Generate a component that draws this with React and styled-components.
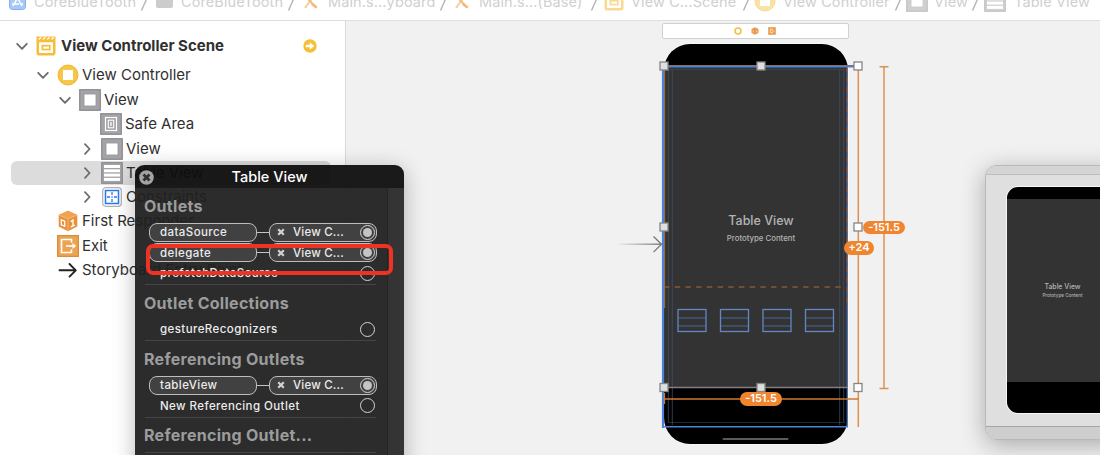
import React from "react";
import styled, { createGlobalStyle } from "styled-components";

const GlobalStyle = createGlobalStyle`
  * { box-sizing: border-box; }
  body {
    margin: 0;
    overflow: hidden;
    font-family: Inter, "Liberation Sans", sans-serif;
    background: #fff;
  }
`;

const Window = styled.div`
  position: relative;
  width: 1100px;
  height: 455px;
  overflow: hidden;
  display: flex;
  flex-direction: column;
`;

/* ---------- jump bar ---------- */

const JumpBar = styled.nav`
  flex: none;
  height: 21px;
  overflow: hidden;
  display: flex;
  background: #fff;
  border-bottom: 1px solid #dedede;
`;

const Crumb = styled.div`
  flex: none;
  width: ${(p) => p.$width}px;
  display: flex;
  height: 20px;
`;

const CrumbIcon = styled.div`
  flex: none;
  width: ${(p) => p.$width}px;
  padding-left: ${(p) => p.$inset}px;
  svg { display: block; margin-top: ${(p) => p.$shift || 0}px; }
`;

const CrumbLabel = styled.span`
  flex: 1;
  margin-top: -8px;
  height: 20px;
  line-height: 20px;
  font-size: 14.5px;
  letter-spacing: 0.1px;
  white-space: nowrap;
  color: #d0d0d0;
`;

/* ---------- outline ---------- */

const Workspace = styled.div`
  flex: 1;
  display: flex;
  min-height: 0;
`;

const Outline = styled.aside`
  flex: none;
  width: 346px;
  padding: 9px 14px 0 11px;
  border-right: 1px solid #d9d9d9;
  background: #fff;
`;

const OutlineRow = styled.div`
  display: flex;
  align-items: center;
  height: ${(p) => p.$height || 24.25}px;
  padding-left: ${(p) => p.$indent}px;
  border-radius: 6px;
  background: ${(p) => (p.$selected ? "#dcdcdc" : "transparent")};
`;

const Disclosure = styled.span`
  flex: none;
  width: 20px;
  display: flex;
  svg { display: block; }
`;

const RowIcon = styled.span`
  flex: none;
  width: ${(p) => p.$width || 25}px;
  display: flex;
  svg { display: block; }
`;

const RowLabel = styled.span`
  flex: 1;
  font-size: 15px;
  line-height: 20px;
  letter-spacing: ${(p) => p.$tracking || 0}px;
  font-weight: ${(p) => (p.$bold ? 700 : 400)};
  white-space: nowrap;
  color: #303030;
`;

/* ---------- canvas ---------- */

const Canvas = styled.main`
  position: relative;
  flex: 1;
  background: #f1f1f1;
  overflow: hidden;
`;

const SceneDock = styled.div`
  position: absolute;
  left: 316px;
  top: 2px;
  width: 187px;
  height: 16px;
  display: flex;
  align-items: center;
  justify-content: center;
  gap: 9px;
  padding-right: 1px;
  border: 1px solid #d0d0d0;
  border-radius: 2px;
  background: #fff;
`;

const Phone = styled.section`
  position: absolute;
  left: ${(p) => p.$x}px;
  top: ${(p) => p.$y}px;
  width: ${(p) => p.$w}px;
  height: ${(p) => p.$h}px;
  padding-top: ${(p) => p.$status}px;
  border-radius: ${(p) => p.$radius}px;
  background: #000;
  box-shadow: 0 0 0 1px #f7f7f7;
  overflow: hidden;
`;

const PhoneTable = styled.div`
  height: ${(p) => p.$height}px;
  padding-top: ${(p) => p.$top}px;
  padding-left: ${(p) => p.$inset || 0}px;
  background: #333;
  text-align: center;
  color: #b4b4b4;
`;

const TableTitle = styled.div`
  font-size: ${(p) => p.$size}px;
  line-height: ${(p) => p.$line}px;
  font-weight: 500;
  white-space: nowrap;
`;

const Guides = styled.svg`
  position: absolute;
  inset: 0;
  display: block;
`;

const Constraint = styled.span`
  position: absolute;
  left: ${(p) => p.$x}px;
  top: ${(p) => p.$y}px;
  width: ${(p) => p.$w}px;
  height: 13.5px;
  line-height: 13px;
  border-radius: 7px;
  background: #f08530;
  color: #fff;
  font-size: 11px;
  font-weight: 600;
  text-align: center;
`;

const Preview = styled.section`
  position: absolute;
  left: 639px;
  top: 144px;
  width: 140px;
  height: 275px;
  display: flex;
  flex-direction: column;
  border: 1px solid #b9b9b9;
  border-radius: 11px;
  background: #dfdfdf;
  overflow: hidden;
`;

const PreviewShadow = styled.div`
  position: absolute;
  left: 639px;
  top: 144px;
  width: 140px;
  height: 275px;
  border-radius: 11px;
  box-shadow: 0 5px 24px rgba(0, 0, 0, 0.3);
`;

const PreviewBar = styled.div`
  flex: none;
  height: ${(p) => p.$height}px;
  background: ${(p) => (p.$footer ? "#cecece" : "#d4d4d4")};
  border-top: ${(p) => (p.$footer ? "1px solid #a5a5a5" : "none")};
  border-bottom: ${(p) => (p.$footer ? "none" : "1px solid #bdbdbd")};
`;

const PreviewBody = styled.div`
  position: relative;
  flex: 1;
`;

/* ---------- connections panel ---------- */

const Panel = styled.section`
  position: absolute;
  left: 135px;
  top: 165px;
  width: 269px;
  height: 310px;
  display: flex;
  flex-direction: column;
  border-radius: 9px;
  overflow: hidden;
`;

const PanelShadow = styled.div`
  position: absolute;
  left: 135px;
  top: 165px;
  width: 269px;
  height: 310px;
  border-radius: 9px;
  box-shadow: 0 4px 22px rgba(0, 0, 0, 0.27);
  clip-path: polygon(-40px -40px, 310px -40px, 310px 340px, 269px 340px, 269px 8px, 261px 0, 8px 0, 0 8px, 0 340px, -40px 340px);
`;

const PanelHeader = styled.header`
  position: relative;
  flex: none;
  height: 23px;
  line-height: 23px;
  text-align: center;
  font-size: 14.5px;
  font-weight: 500;
  color: #fff;
  background: rgba(13, 13, 13, 0.945);
  svg { position: absolute; left: 4px; top: 4.5px; }
`;

const PanelContent = styled.div`
  flex: 1;
  display: flex;
  background: rgba(32, 32, 32, 0.945);
`;

const Sections = styled.div`
  flex: 1;
  padding-left: 10px;
`;

const ScrollTrack = styled.div`
  flex: none;
  width: 17px;
  border-left: 1px solid #242424;
  background: #343434;
`;

const Section = styled.div`
  width: 231px;
  padding: 7.5px 0 0.5px;
  border-bottom: 1px solid #454545;
`;

const SectionTitle = styled.h2`
  margin: 0 0 6.5px -1px;
  font-size: 16px;
  line-height: 20px;
  font-weight: 700;
  letter-spacing: 0.28px;
  color: #9c9c9c;
  white-space: nowrap;
`;

const OutletRow = styled.div`
  display: flex;
  align-items: center;
  height: 20.5px;
  padding-left: 4px;
  margin-right: -1px;
  color: #ececec;
  font-size: 11.5px;
  font-weight: 500;
  letter-spacing: 0.42px;
`;

const Pill = styled.div`
  flex: none;
  width: 108px;
  height: 19px;
  display: flex;
  align-items: center;
  padding: 0 1px 0 ${(p) => p.$inset}px;
  border: 1.3px solid #bdbdbd;
  border-radius: 8px;
  background: #414141;
`;

const Wire = styled.span`
  width: 12px;
  height: 1px;
  background: #c4c4c4;
`;

const OutletName = styled.span`
  flex: 1;
  padding-left: ${(p) => p.$inset}px;
  letter-spacing: ${(p) => p.$tracking ?? 0.42}px;
  white-space: nowrap;
`;

const Socket = styled.span`
  flex: none;
  width: 15px;
  height: 15px;
  margin-right: ${(p) => (p.$filled ? 0 : 2)}px;
  padding: 2px;
  border: 1px solid #d4d4d4;
  border-radius: 50%;
  &::after {
    content: "";
    display: ${(p) => (p.$filled ? "block" : "none")};
    width: 9px;
    height: 9px;
    border-radius: 50%;
    background: #c4c4c4;
  }
`;

const Highlight = styled.div`
  position: absolute;
  left: 145.5px;
  top: 243.5px;
  width: 247px;
  height: 31px;
  border: 4px solid #ee3324;
  border-radius: 7px;
`;

/* ---------- drawings ---------- */

const Chevron = ({ open }) => (
  <svg width="12" height="12" viewBox="0 0 12 12" fill="none" stroke="#6d6d6d" strokeWidth="1.8" strokeLinecap="round" strokeLinejoin="round">
    <path d={open ? "M1.2 3.8 6 8.8 10.8 3.8" : "M4 1.2 8.6 6 4 10.8"} />
  </svg>
);

const ViewIcon = ({ kind = "view", faded }) => (
  <svg width="22" height="22" viewBox="0 0 22 22" opacity={faded ? 0.5 : 1}>
    <rect x=".75" y=".75" width="20.5" height="20.5" fill="#a3a3a8" stroke="#8b8b90" strokeWidth="1.3" />
    {kind === "view" && <rect x="5" y="5" width="12" height="12" fill="#fff" stroke="#929296" strokeWidth=".8" />}
    {kind === "safe" && (
      <g fill="none" stroke="#fff">
        <rect x="5.5" y="4.5" width="11" height="13" strokeWidth="1.2" />
        <rect x="8.3" y="7.2" width="5.4" height="7.6" strokeWidth="1.1" />
        <path d="M11 9v4" strokeWidth="1.3" />
      </g>
    )}
    {kind === "table" && (
      <g fill="#fff">
        <rect x="3" y="3" width="16" height="3" />
        <rect x="3" y="7.3" width="16" height="3" />
        <rect x="3" y="11.6" width="16" height="3" />
        <rect x="3" y="15.9" width="16" height="3" />
      </g>
    )}
  </svg>
);

const ControllerIcon = ({ faded }) => (
  <svg width="22" height="22" viewBox="0 0 22 22" opacity={faded ? 0.5 : 1}>
    <circle cx="11" cy="11" r="10" fill="#f7c744" stroke="#f1b632" strokeWidth="1" />
    <rect x="5.5" y="5.5" width="11" height="11" rx=".8" fill="#fff" stroke="#edb83c" strokeWidth=".7" />
  </svg>
);

const SceneIcon = ({ faded }) => (
  <svg width="20" height="20" viewBox="0 0 20 20" opacity={faded ? 0.55 : 1}>
    <path d="M.5.5h19v16.200q0 2.800-2.800 2.800H3.300Q.5 19.500.5 16.700z" fill="#f6bd38" />
    <path d="M2 3.600 4 1.200h1.900L3.900 3.600zM6.200 3.600l2-2.400h1.900l-2 2.400zM10.400 3.600l2-2.400h1.900l-2 2.400zM14.600 3.600l2-2.400h1.900l-2 2.400z" fill="#fff" />
    <rect x="3" y="6.200" width="14" height="10.800" rx=".8" fill="#fff" />
    <rect x="6.400" y="9.700" width="7.400" height="3.800" fill="#fff" stroke="#f6bd38" strokeWidth="1.700" />
  </svg>
);

const EntryArrow = () => (
  <svg width="14" height="14" viewBox="0 0 14 14">
    <circle cx="7" cy="7" r="6.700" fill="#f5bf38" />
    <path d="M2.800 5.700h4V3.200L11.200 7l-4.400 3.800V8.300h-4z" fill="#fff" />
  </svg>
);

const ConstraintsIcon = () => (
  <svg width="22" height="22" viewBox="0 0 22 22">
    <rect x="1.700" y="1.700" width="18.600" height="18.600" rx="3" fill="#fff" stroke="#b0b0b0" strokeWidth="1.200" />
    <rect x="4.500" y="4.500" width="13" height="13" fill="#fff" stroke="#2478f0" strokeWidth="1.500" />
    <path d="M11 6v3M11 13v3M6 11h3M13 11h3M11 10.300v1.400" stroke="#2478f0" strokeWidth="1.300" />
  </svg>
);

const ResponderIcon = () => (
  <svg width="22" height="22" viewBox="0 0 22 22">
    <path d="M11 .8 20.300 5v11.500L11 21.300 1.700 16.500V5z" fill="#e8913a" />
    <path d="M11 .8 20.300 5 11 8.800 1.700 5z" fill="#efa453" />
    <path d="M11 8.800v12.500M1.700 5 11 8.800 20.300 5" fill="none" stroke="#f6c084" strokeWidth=".8" />
    <path d="M4.300 9.800l3.400 1.400v5L4.300 14.800z" fill="none" stroke="#fff" strokeWidth="1.300" />
    <path d="M13.700 11.600l2.300-1.500v5.800M13.700 16.800l4.200-1.700" fill="none" stroke="#fff" strokeWidth="1.400" />
  </svg>
);

const ExitIcon = () => (
  <svg width="22" height="22" viewBox="0 0 22 22">
    <rect x=".6" y=".6" width="20.800" height="20.800" fill="#eba452" stroke="#dc8b38" strokeWidth="1.200" />
    <path d="M14.500 7.500v-3h-10v13h10v-3" fill="none" stroke="#fff" strokeWidth="1.600" />
    <path d="M9 11h8" stroke="#fff" strokeWidth="1.600" />
    <path d="M15.500 8l3.700 3-3.700 3z" fill="#fff" />
  </svg>
);

const LongArrow = () => (
  <svg width="22" height="22" viewBox="0 0 22 22" fill="none" stroke="#222" strokeWidth="1.900" strokeLinecap="round" strokeLinejoin="round">
    <path d="M2.500 11.300h16M12.500 5l6.300 6.300-6.300 6.300" />
  </svg>
);

const ProjectIcon = () => (
  <svg width="17" height="10" viewBox="0 0 17 10">
    <path d="M.5-6h16V6.500q0 3-3 3h-10q-3 0-3-3z" fill="#a8c8f8" stroke="#84aef0" />
    <path d="M8.500-2 4 6M8.500-2l4.500 8M3 4h7M11.500 4H14" stroke="#fff" strokeWidth="1.500" fill="none" />
  </svg>
);

const FolderIcon = () => (
  <svg width="17" height="8" viewBox="0 0 17 8"><path d="M0-4h17V6q0 2-2 2H2Q0 8 0 6z" fill="#ccc" /></svg>
);

const StoryboardIcon = () => (
  <svg width="14" height="9" viewBox="0 0 14 9" strokeLinecap="round">
    <path d="M9-3 1.500 7.300" stroke="#f5cf9f" strokeWidth="2" />
    <path d="M3-2l8.500 8.800" stroke="#efbd7c" strokeWidth="2" />
    <path d="M8.500 4.500l3.500 2.500" stroke="#efbd7c" strokeWidth="2.600" />
  </svg>
);

const Slash = () => (
  <svg width="9" height="12" viewBox="0 0 9 12"><path d="M7.500-3 1.500 10.500" stroke="#b0b0b0" strokeWidth="1.300" /></svg>
);

const Cross = () => (
  <svg width="8" height="8" viewBox="0 0 8 8"><path d="M1.200 1.200l5.600 5.600M6.800 1.200 1.200 6.800" stroke="#d0d0d0" strokeWidth="2.300" /></svg>
);

const crumbs = [
  { icon: <ProjectIcon />, width: 149, inset: 9, lead: 34, text: "CoreBlueTooth" },
  { icon: <FolderIcon />, width: 147, inset: 7, lead: 32, text: "CoreBlueTooth" },
  { icon: <StoryboardIcon />, width: 152, inset: 8, lead: 32, text: "Main.s...yboard" },
  { icon: <StoryboardIcon />, width: 151, inset: 7, lead: 31, text: "Main.s...(Base)" },
  { icon: <SceneIcon faded />, shift: -9, width: 152, inset: 5, lead: 32, text: "View C...Scene" },
  { icon: <ControllerIcon faded />, shift: -10, width: 151.5, inset: 3, lead: 32, text: "View Controller" },
  { icon: <ViewIcon faded />, shift: -10, width: 77.5, inset: 3.5, lead: 31.5, text: "View" },
  { icon: <ViewIcon faded kind="table" />, shift: -10, width: 122, inset: 4, lead: 34, text: "Table View", last: true },
];

const outline = [
  { indent: 48, open: true, icon: <ViewIcon />, text: "View" },
  { indent: 89, icon: <ViewIcon kind="safe" />, text: "Safe Area" },
  { indent: 70, open: false, icon: <ViewIcon />, text: "View" },
  { indent: 70, open: false, icon: <ViewIcon kind="table" />, text: "Table View", selected: true },
  { indent: 70, open: false, icon: <ConstraintsIcon />, text: "Constraints" },
  { indent: 46, icon: <ResponderIcon />, text: "First Responder" },
  { indent: 46, icon: <ExitIcon />, text: "Exit" },
  { indent: 46, icon: <LongArrow />, text: "Storyboard Entry Point" },
];

const Connected = ({ name }) => (
  <OutletRow>
    <Pill $inset={10}>{name}</Pill>
    <Wire />
    <Pill $inset={7}>
      <Cross />
      <OutletName $inset={8} $tracking={0.2}>View C...</OutletName>
      <Socket $filled />
    </Pill>
  </OutletRow>
);

const Unconnected = ({ name }) => (
  <OutletRow>
    <OutletName $inset={11}>{name}</OutletName>
    <Socket />
  </OutletRow>
);

const handles = [
  [318, 45], [415, 45], [512, 45],
  [318, 206], [512, 206],
  [318, 366.5], [415, 366.5], [512, 366.5],
];

export default function App() {
  return (
    <Window>
      <GlobalStyle />
      <JumpBar>
        {crumbs.map((c, i) => (
          <Crumb key={i} $width={c.width}>
            <CrumbIcon $width={c.lead} $inset={c.inset} $shift={c.shift}>{c.icon}</CrumbIcon>
            <CrumbLabel>{c.text}</CrumbLabel>
            {!c.last && <Slash />}
          </Crumb>
        ))}
      </JumpBar>

      <Workspace>
        <Outline>
          <OutlineRow $height={32} $indent={5}>
            <Disclosure><Chevron open /></Disclosure>
            <RowIcon><SceneIcon /></RowIcon>
            <RowLabel $bold>View Controller Scene</RowLabel>
            <RowIcon $width={28}><EntryArrow /></RowIcon>
          </OutlineRow>
          <OutlineRow $height={26} $indent={26}>
            <Disclosure><Chevron open /></Disclosure>
            <RowIcon><ControllerIcon /></RowIcon>
            <RowLabel>View Controller</RowLabel>
          </OutlineRow>
          {outline.map((r) => (
            <OutlineRow key={r.text + r.indent} $indent={r.indent} $selected={r.selected}>
              {r.open !== undefined && <Disclosure><Chevron open={r.open} /></Disclosure>}
              <RowIcon>{r.icon}</RowIcon>
              <RowLabel>{r.text}</RowLabel>
            </OutlineRow>
          ))}
        </Outline>

        <Canvas>
          <SceneDock>
            <svg width="8" height="8" viewBox="0 0 8 8"><circle cx="4" cy="4" r="3" fill="#fff" stroke="#f4bd3d" strokeWidth="1.5" /></svg>
            <svg width="8" height="8" viewBox="0 0 8 8"><path d="M4 .2 7.500 2v4L4 7.800.5 6V2z" fill="#e99a4b" /><path d="M2.300 3.500v2M5.700 3.500v2" stroke="#f8d2a8" /></svg>
            <svg width="8" height="8" viewBox="0 0 8 8"><path d="M.2.200h7.600v7.600H.2z" fill="#e99a4b" /><path d="M5 2.300H2.300v3.400H5M4 4h2.300" stroke="#fae0c4" fill="none" /></svg>
          </SceneDock>

          <Phone $x={318} $y={23} $w={184} $h={400} $status={22} $radius={26}>
            <PhoneTable $height={321} $top={145.5} $inset={10}>
              <TableTitle $size={12.5} $line={18}>Table View</TableTitle>
              <TableTitle $size={7.8} $line={16}>Prototype Content</TableTitle>
            </PhoneTable>
          </Phone>

          <Guides width="754" height="434" viewBox="0 0 754 434" fill="none">
            <defs>
              <linearGradient id="entry" x1="0" x2="1"><stop stopColor="#777" stopOpacity="0" /><stop offset="1" stopColor="#777" /></linearGradient>
            </defs>
            <rect x="270" y="222.500" width="46" height="1.400" fill="url(#entry)" />
            <path d="M307.500 215.500l8 7.800-8 7.800" stroke="#777" strokeWidth="1.300" />
            <path d="M322.300 48v353M326.300 48v356M493.700 48v356M497.700 48v353" stroke="#425166" strokeWidth="1" opacity=".75" />
            <path d="M321 48.500h178M322 401.500h177" stroke="#425166" strokeWidth="1" opacity=".5" />
            <path d="M318 44.500h194" stroke="#9a6746" strokeWidth="1" />
            <path d="M317 45.700h195" stroke="#4c83d8" strokeWidth="1.800" />
            <path d="M317 46v361" stroke="#4c83d8" strokeWidth="2.200" />
            <path d="M318.600 46v241" stroke="#b06f42" strokeWidth="1" />
            <path d="M316 405.700h186" stroke="#4c83d8" strokeWidth="1.400" />
            <path d="M501.300 46v360" stroke="#4c77bb" strokeWidth="1.300" />
            <path d="M501.300 46v241" stroke="#a35f3e" strokeWidth="1.300" strokeDasharray="5 5" />
            <path d="M319 266h177" stroke="#865a35" strokeWidth="1.500" strokeDasharray="5.500 5.200" strokeDashoffset="1" />
            {[332.5, 375, 417.5, 460].map((x) => (
              <g key={x}>
                <path d={`M${x} 297h27M${x} 305h27`} stroke="#435777" strokeWidth="1.500" />
                <rect x={x - 0.5} y="288.500" width="28" height="22" stroke="#6387c4" strokeWidth="1.300" />
              </g>
            ))}
            <path d="M318 366.500h184" stroke="#857f83" strokeWidth="1.500" />
            <path d="M512.300 45v361M538 45.500v322M533.500 45.800h9M533.500 367.500h9" stroke="#dc924e" strokeWidth="1.500" />
            <path d="M318.500 378h194M318.500 372v11" stroke="#cf7a30" strokeWidth="1.300" />
            {handles.map(([x, y], i) => (
              <rect key={i} x={x - 4} y={y - 4} width="8" height="8" fill={x === 512 ? "#fff" : "#dedfe0"} stroke="#858585" strokeWidth="1.300" />
            ))}
            <rect x="376.500" y="417" width="66" height="2" rx="1" fill="#5b5b5b" />
          </Guides>
          <Constraint $x={517} $y={199.5} $w={42}>-151.5</Constraint>
          <Constraint $x={498} $y={220} $w={30}>+24</Constraint>
          <Constraint $x={394} $y={371} $w={42}>-151.5</Constraint>

          <PreviewShadow />
          <Preview>
            <PreviewBar $height={9} />
            <PreviewBody>
              <Phone $x={20.5} $y={12} $w={112} $h={226} $status={12} $radius={11}>
                <PhoneTable $height={182.5} $top={82}>
                  <TableTitle $size={6.9} $line={11}>Table View</TableTitle>
                  <TableTitle $size={4.6} $line={8}>Prototype Content</TableTitle>
                </PhoneTable>
              </Phone>
            </PreviewBody>
            <PreviewBar $footer $height={13} />
          </Preview>
        </Canvas>
      </Workspace>

      <PanelShadow />
      <Panel>
        <PanelHeader>
          <svg width="15" height="15" viewBox="0 0 15 15"><circle cx="7.500" cy="7.500" r="7.300" fill="#a3a3a3" /><path d="M4.500 4.500l6 6M10.500 4.500l-6 6" stroke="#303030" strokeWidth="2.800" /></svg>
          Table View
        </PanelHeader>
        <PanelContent>
          <Sections>
            <Section>
              <SectionTitle>Outlets</SectionTitle>
              <Connected name="dataSource" />
              <Connected name="delegate" />
              <Unconnected name="prefetchDataSource" />
            </Section>
            <Section>
              <SectionTitle>Outlet Collections</SectionTitle>
              <Unconnected name="gestureRecognizers" />
            </Section>
            <Section>
              <SectionTitle>Referencing Outlets</SectionTitle>
              <Connected name="tableView" />
              <Unconnected name="New Referencing Outlet" />
            </Section>
            <Section>
              <SectionTitle>Referencing Outlet...</SectionTitle>
            </Section>
          </Sections>
          <ScrollTrack />
        </PanelContent>
      </Panel>
      <Highlight />
    </Window>
  );
}
